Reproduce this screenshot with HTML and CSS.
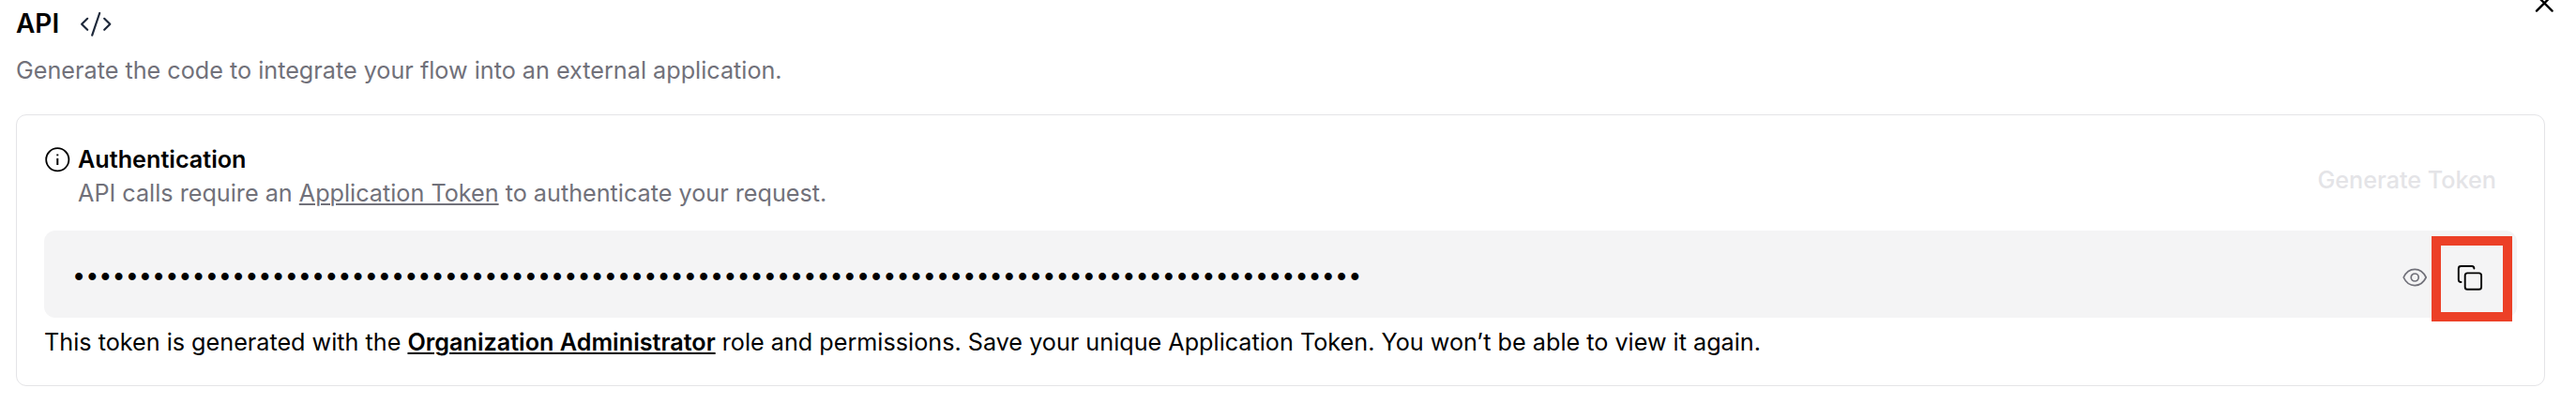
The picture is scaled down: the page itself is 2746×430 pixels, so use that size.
FILE: index.html
```html
<!DOCTYPE html>
<html lang="en">
<head>
<meta charset="utf-8">
<title>API</title>
<link rel="stylesheet" href="styles.css">
</head>
<body>
<main class="dialog">
  <header class="header">
    <h1 class="title">API</h1>
    <svg class="code-icon" viewBox="0 0 36 28" fill="none" stroke="currentColor" stroke-width="2.2" stroke-linecap="round" stroke-linejoin="round"><path d="M8.200 7.800 2.100 13.700l6.100 6.100M26.200 7.800l6.100 5.900-6.100 6.100M21.200 2 13.200 25.600"/></svg>
  </header>
  <svg class="close-icon" viewBox="0 0 20 20" fill="none" stroke="currentColor" stroke-width="2.4" stroke-linecap="round"><path d="M2 2l16.600 16.600M18.600 2 2 18.600"/></svg>
  <p class="description">Generate the code to integrate your flow into an external application.</p>
  <section class="card">
    <div class="card-top">
      <svg class="info-icon" viewBox="0 0 28 28" fill="none" stroke="currentColor" stroke-width="1.8"><circle cx="14.300" cy="14.300" r="12.100"/><path stroke-width="2" d="M14.300 12.900v7M14.300 8.400v1.900"/></svg>
      <div class="auth">
        <h2 class="auth-title">Authentication</h2>
        <p class="auth-text">API calls require an <a class="link">Application Token</a> to authenticate your request.</p>
      </div>
      <button class="generate" disabled>Generate Token</button>
    </div>
    <div class="field">
      <span class="token">•••••••••••••••••••••••••••••••••••••••••••••••••••••••••••••••••••••••••••••••••••••••••••••••••</span>
      <svg class="eye-icon" viewBox="0 0 26 20" fill="none" stroke="currentColor" stroke-width="1.7" stroke-linejoin="round"><path d="M1.200 10C3.500 5 7.800 1.400 13.200 1.400S22.700 5 25.200 10C22.700 15 18.400 18.600 13.200 18.600S3.500 15 1.200 10Z"/><circle cx="13.200" cy="10" r="4"/></svg>
      <span class="copy">
        <svg class="copy-icon" viewBox="0 0 28 28" fill="none" stroke="currentColor" stroke-width="1.9" stroke-linecap="round"><rect x="8.700" y="9.400" width="17.400" height="17.400" rx="2.600"/><path d="M4.500 19C2.800 18.900 1.800 17.900 1.800 16.400V4.500C1.800 2.900 2.800 2 4.400 2h11.600c1.500 0 2.400.900 2.400 2.600"/></svg>
      </span>
    </div>
    <p class="note">This token is generated with the <strong class="role">Organization Administrator</strong> role and permissions. Save your unique Application Token. You won’t be able to view it again.</p>
  </section>
</main>
</body>
</html>
```
FILE: styles.css
```css
* { box-sizing: border-box; }
body { margin: 0; background: #fff; overflow: hidden; font-family: Inter, sans-serif; color: #000; }
h1, h2, p { margin: 0; }
svg { display: block; flex: none; }
.dialog { position: relative; height: 430px; padding: 4px 33px 0 17px; font-size: 25.2px; line-height: 36px; }
.header { display: flex; align-items: center; gap: 22px; height: 44px; }
.title { width: 46px; font-size: 28px; line-height: 42px; padding-bottom: 2px; font-weight: 600; }
.code-icon { width: 36px; height: 28px; color: #1e293b; }
.close-icon { position: absolute; top: -7px; left: 2702px; width: 20px; height: 20px; }
.description { margin-top: 9px; color: #71717a; }
.card { margin-top: 29px; height: 290px; padding: 29px; border: 1px solid #e4e4e7; border-radius: 11px; }
.card-top { display: flex; height: 94px; }
.info-icon { width: 28px; height: 28px; margin-top: 4px; }
.auth { flex: 1; padding-left: 8px; }
.auth-title { font-size: 25.2px; line-height: 36px; font-weight: 600; }
.auth-text { color: #71717a; }
.link, .role { text-decoration: underline; text-decoration-thickness: 2px; text-underline-offset: 2px; }
.generate { border: 0; padding: 0 22px 0 0; margin-top: 22px; height: 36px; background: none; font: 500 25.2px/36px Inter, sans-serif; color: #e4e4e7; }
.field { display: flex; align-items: center; height: 93px; padding: 0 5px 0 30px; border-radius: 12px; background: #f4f4f5; }
.token { flex: 1; white-space: nowrap; }
.eye-icon { width: 26px; height: 20px; margin-right: 5px; margin-top: 7px; color: #71717a; }
.copy { display: flex; align-items: center; justify-content: center; width: 86px; height: 91px; margin-top: 10px; border: 10px solid #ec4027; padding: 0 5px 3px 0; }
.copy-icon { width: 28px; height: 28px; }
.note { margin-top: 8px; }
.role { font-weight: 600; }
```
